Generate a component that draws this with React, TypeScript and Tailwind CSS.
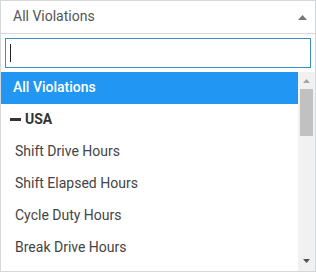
import React from "react";

export default function App() {
  const items = ["Shift Drive Hours", "Shift Elapsed Hours", "Cycle Duty Hours", "Break Drive Hours"];
  return (
    <div
      className="w-[316px] h-[272px] border border-[#d4d7dc] bg-white flex flex-col"
      style={{ fontFamily: "Roboto, 'Liberation Sans', sans-serif" }}
    >
      <div className="h-[33px] border-b border-[#d4d7dc] flex items-center justify-between pl-[12px] pr-[8px] pb-[2px] shrink-0">
        <span className="text-[14px] text-[#555]">All Violations</span>
        <svg width="9" height="6" viewBox="0 0 9 6" className="mt-[3px]">
          <polygon points="4.5,0 9,5 0,5" fill="#777" />
        </svg>
      </div>
      <div className="px-[4px] pt-[4px] pb-[4px] shrink-0">
        <div className="h-[30px] border border-[#3a8fbf] flex items-center pl-[4px]">
          <span className="w-[1px] h-[18px] bg-[#222]" />
        </div>
      </div>
      <div className="flex flex-1 min-h-0">
        <div className="flex-1 flex flex-col">
          <div className="h-[32px] bg-[#2196f3] text-white font-medium text-[14px] flex items-center pl-[12px] pb-[2px]">
            All Violations
          </div>
          <div className="h-[32px] flex items-center pl-[9px] pb-[2px] text-[14px] font-bold text-[#333]">
            <span className="w-[11px] h-[3px] bg-[#333] mr-[4px]" />
            USA
          </div>
          {items.map((t) => (
            <div key={t} className="h-[32px] flex items-center pl-[14px] pb-[2px] text-[14px] text-[#444]">
              {t}
            </div>
          ))}
        </div>
        <div className="w-[17px] bg-[#f1f1f1] flex flex-col items-center">
          <svg width="9" height="5" viewBox="0 0 9 5" className="mt-[7px]">
            <polygon points="4.5,0 8,4 1,4" fill="#a3a3a3" />
          </svg>
          <div className="mt-[5px] w-[13px] h-[47px] bg-[#c1c1c1]" />
          <div className="flex-1" />
          <svg width="9" height="5" viewBox="0 0 9 5" className="mb-[7px]">
            <polygon points="1,0 8,0 4.5,4" fill="#505050" />
          </svg>
        </div>
      </div>
    </div>
  );
}
